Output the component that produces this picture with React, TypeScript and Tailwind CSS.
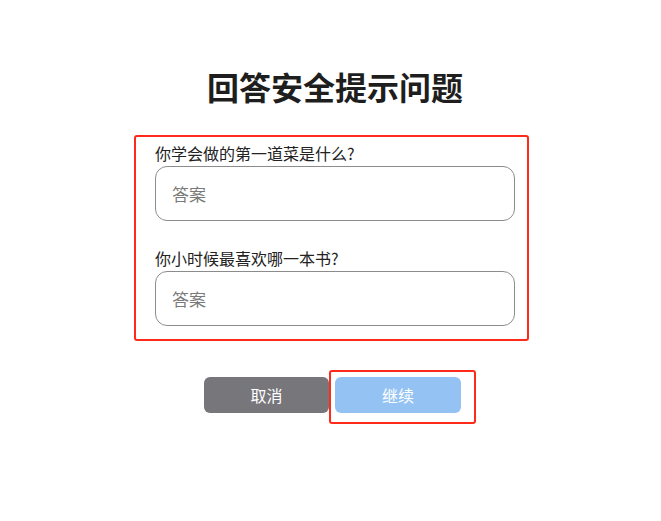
export default function App() {
  const font = { fontFamily: '"Noto Sans CJK SC", "Noto Sans", sans-serif' };

  return (
    <div className="w-[661px] h-[521px] bg-white text-[#222]" style={font}>
      {/* Title */}
      <h1 className="pt-[66px] pl-[9px] text-center text-[32px] leading-[40px] font-bold text-[#1e1e1e]">
        回答安全提示问题
      </h1>

      {/* Questions */}
      <div className="mt-[29px] ml-[134px] w-[395px] border-2 border-[#ff2a1a] rounded-[3px] pl-[19px] pr-[12px] pt-[5px] pb-[13px]">
        <label className="block text-base leading-[22px] mb-[2px]">你学会做的第一道菜是什么?</label>
        <input
          placeholder="答案"
          className="w-full h-[55px] border border-[#8c8c8c] rounded-[12px] pl-4 text-[17px] placeholder:text-[#7a7a7a] outline-none"
        />

        <label className="block mt-[26px] text-base leading-[22px] mb-[2px]">你小时候最喜欢哪一本书?</label>
        <input
          placeholder="答案"
          className="w-full h-[55px] border border-[#8c8c8c] rounded-[12px] pl-4 text-[17px] placeholder:text-[#7a7a7a] outline-none"
        />
      </div>

      {/* Buttons */}
      <div className="mt-[29px] flex justify-center pl-[19px]">
        <button className="mt-[7px] w-[125px] h-[36px] rounded-[6px] bg-[#77767b] text-white text-base">
          取消
        </button>
        <div className="border-2 border-[#ff2a1a] rounded-[3px] pl-[4px] pr-[13px] pt-[5px] pb-[9px]">
          <button className="w-[126px] h-[36px] rounded-[6px] bg-[#94c3f3] text-white text-base">
            继续
          </button>
        </div>
      </div>
    </div>
  );
}
